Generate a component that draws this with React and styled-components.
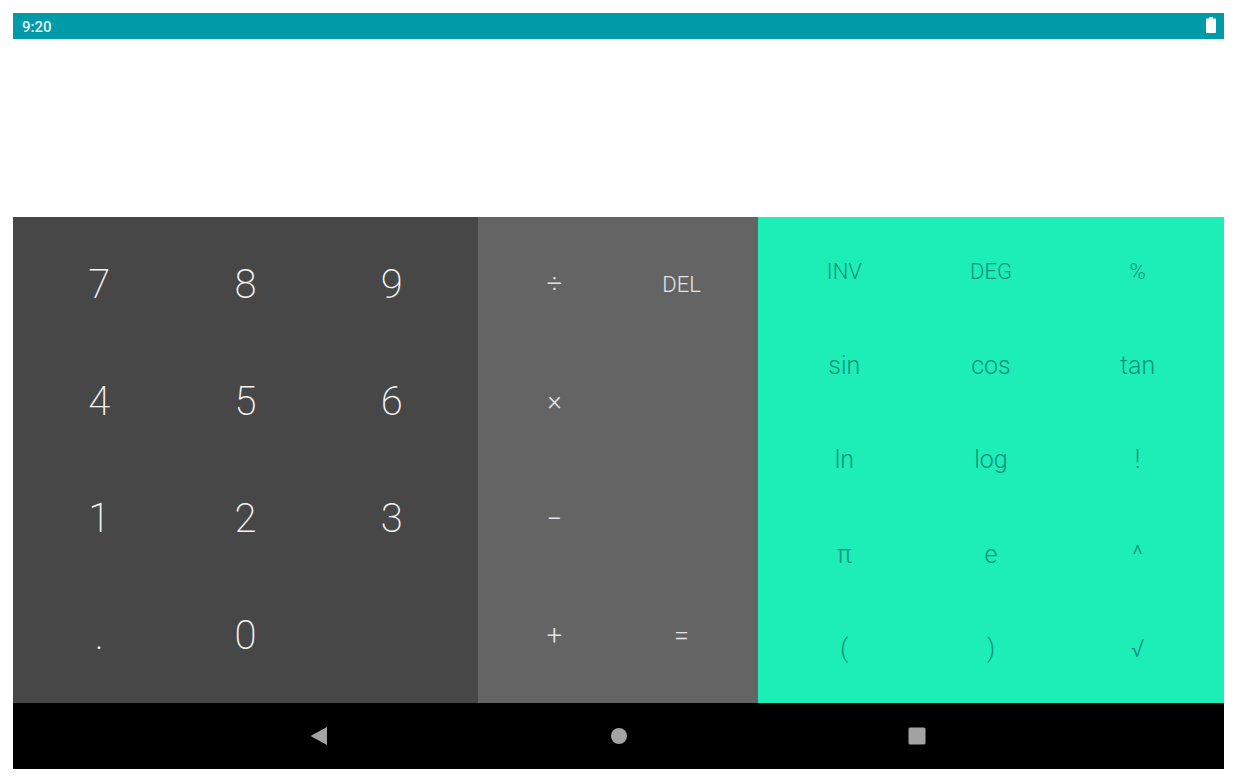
import React from "react";
import styled, { createGlobalStyle } from "styled-components";

const numberKeys = ["7", "8", "9", "4", "5", "6", "1", "2", "3", ".", "0"];
const opKeys = ["÷", "DEL", "×", "", "−", "", "+", "="];
const advancedKeys = ["INV", "DEG", "%", "sin", "cos", "tan", "ln", "log", "!", "π", "e", "^", "(", ")", "√"];

const App = () => {
  return (
    <>
      <GlobalStyle />
      <Screen>
        <StatusBar>
          <Clock>9:20</Clock>
          <Battery viewBox="0 0 10 16">
            <path d="M3 0h4v1.500h2c.6 0 1 .4 1 1V15c0 .6-.4 1-1 1H1c-.6 0-1-.4-1-1V2.500c0-.6.4-1 1-1h2z" fill="#fff" />
          </Battery>
        </StatusBar>
        <Display />
        <Keypad>
          <NumberPad>
            {numberKeys.map((key) => (
              <NumberKey key={key}>{key}</NumberKey>
            ))}
          </NumberPad>
          <OpPad>
            {opKeys.map((key, i) => (
              <OpKey key={i} $small={key === "DEL"}>
                {key}
              </OpKey>
            ))}
          </OpPad>
          <AdvancedPad>
            {advancedKeys.map((key, i) => (
              <AdvancedKey key={key} $small={i < 3}>
                {key}
              </AdvancedKey>
            ))}
          </AdvancedPad>
        </Keypad>
        <NavBar>
          <svg width="24" height="24" viewBox="0 0 24 24">
            <path d="M1.500 12 18 3v18z" fill="#a3a3a3" />
          </svg>
          <svg width="24" height="24" viewBox="0 0 24 24">
            <circle cx="12" cy="12" r="8" fill="#a3a3a3" />
          </svg>
          <svg width="24" height="24" viewBox="0 0 24 24">
            <rect x="3.500" y="3.500" width="17" height="17" rx="1.500" fill="#a3a3a3" />
          </svg>
        </NavBar>
      </Screen>
    </>
  );
};

const GlobalStyle = createGlobalStyle`
  html, body {
    margin: 0;
    padding: 0;
    background: #fff;
  }
  body {
    font-family: Roboto, "Liberation Sans", sans-serif;
  }
`;

const Screen = styled.div`
  display: flex;
  flex-direction: column;
  width: 1211px;
  height: 756px;
  margin: 13px 14px 15px 13px;
`;

const StatusBar = styled.div`
  display: flex;
  align-items: center;
  justify-content: space-between;
  height: 26px;
  padding: 0 8px 0 9px;
  background-color: #009aa8;
  color: #e6f6f7;
`;

const Clock = styled.span`
  padding-top: 2px;
  font-size: 15px;
  font-weight: 500;
`;

const Battery = styled.svg`
  width: 10px;
  height: 16px;
  margin-bottom: 2px;
`;

const Display = styled.div`
  height: 178px;
  background-color: #fff;
`;

const Keypad = styled.div`
  display: grid;
  grid-template-columns: 465px 280px 466px;
  height: 486px;
`;

const NumberPad = styled.div`
  display: grid;
  grid-template-columns: repeat(3, 1fr);
  grid-template-rows: repeat(4, 1fr);
  padding: 8.5px 13px;
  background-color: #474747;
`;

const NumberKey = styled.div`
  display: flex;
  align-items: center;
  justify-content: center;
  color: #f4f4f4;
  font-size: 40px;
  font-weight: 200;
`;

const OpPad = styled.div`
  display: grid;
  grid-template-columns: repeat(2, 1fr);
  grid-template-rows: repeat(4, 1fr);
  padding: 8.5px 13px;
  background-color: #646464;
`;

const OpKey = styled.div`
  display: flex;
  align-items: center;
  justify-content: center;
  color: #e4e4e4;
  font-size: ${(props) => (props.$small ? "22px" : "27px")};
  font-weight: 300;
`;

const AdvancedPad = styled.div`
  display: grid;
  grid-template-columns: repeat(3, 1fr);
  grid-template-rows: repeat(5, 1fr);
  padding: 7.5px 13px;
  background-color: #1dedb7;
`;

const AdvancedKey = styled.div`
  display: flex;
  align-items: center;
  justify-content: center;
  color: #0d9379;
  font-size: ${(props) => (props.$small ? "22px" : "25px")};
  font-weight: 300;
`;

const NavBar = styled.div`
  display: flex;
  align-items: center;
  justify-content: center;
  gap: 274px;
  height: 66px;
  background-color: #000;
`;

export default App;
